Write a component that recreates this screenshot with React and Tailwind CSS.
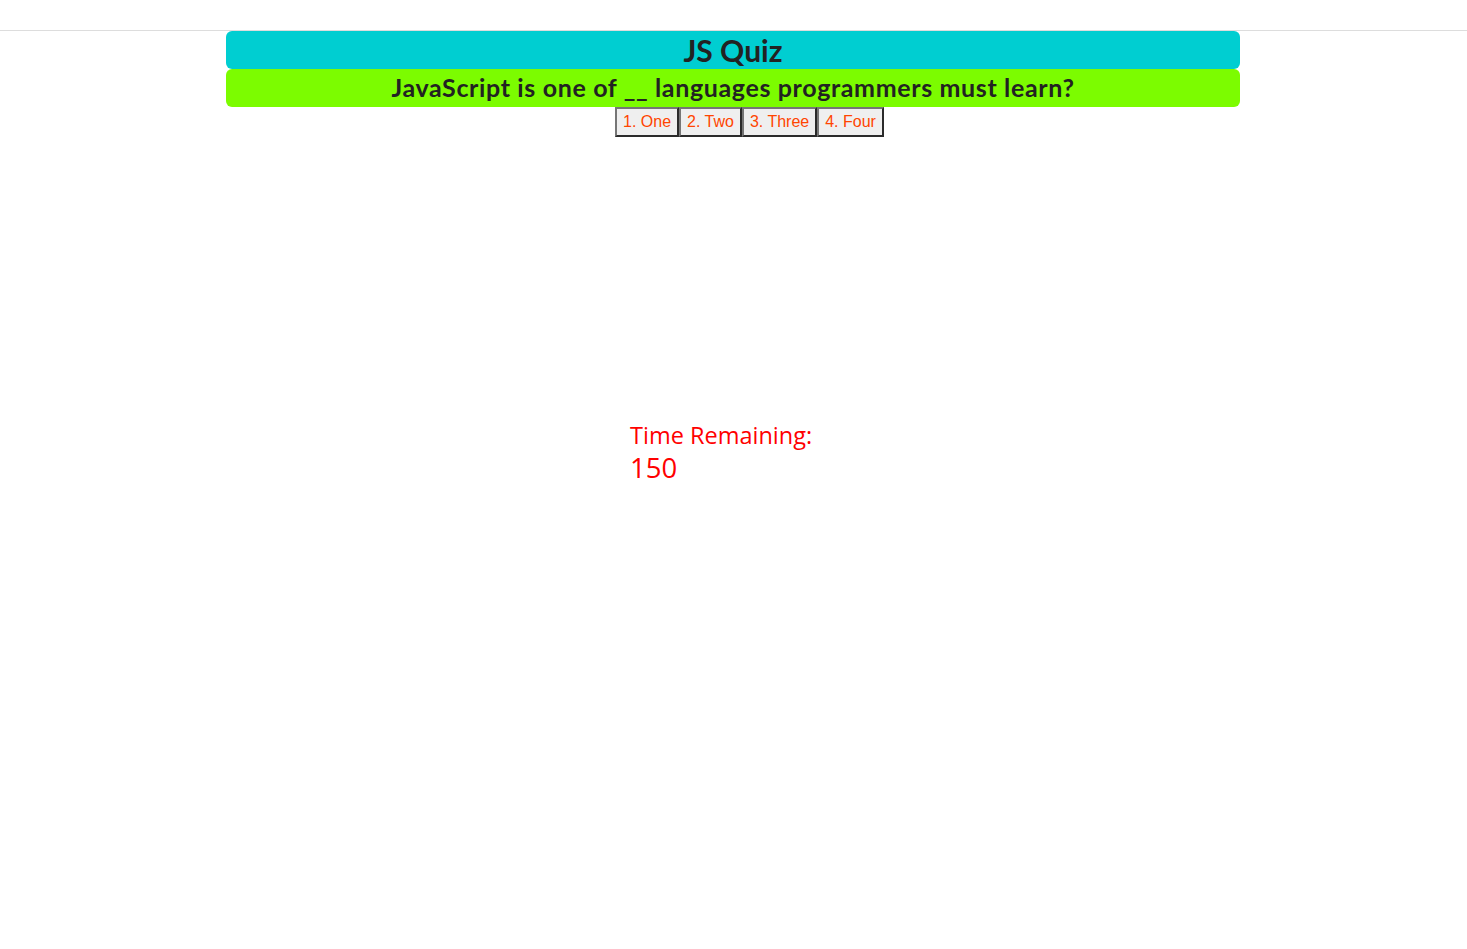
export default function App() {
  const opts = ["1. One", "2. Two", "3. Three", "4. Four"];
  return (
    <div className="min-h-[949px] bg-white">
      <div className="h-[31px] border-b border-[#dddddd]" />
      <div className="w-[1014px] ml-[226px]">
        <div
          className="h-[38px] bg-[#00ced1] rounded-[6px] flex items-center justify-center text-[#222222] font-bold text-[30px]"
          style={{ fontFamily: "Lato, 'Open Sans', sans-serif" }}
        >
          <span>JS Quiz</span>
        </div>
        <div
          className="h-[38px] bg-[#7cfc00] rounded-[6px] flex items-center justify-center text-[#222222] font-bold text-[25px] tracking-[0.64px]"
          style={{ fontFamily: "Lato, 'Open Sans', sans-serif" }}
        >
          JavaScript is one of __ languages programmers must learn?
        </div>
      </div>
      <div className="flex pl-[615px]">
        {opts.map((o) => (
          <button
            key={o}
            className="h-[30px] px-[6px] bg-[#efefef] text-[#ff4500] text-[16px] border-2 border-t-[#767676] border-l-[#767676] border-r-[#2b2b2b] border-b-[#2b2b2b]"
            style={{ fontFamily: "'Liberation Sans', Arial, sans-serif" }}
          >
            {o}
          </button>
        ))}
      </div>
      <div
        className="pl-[630px] pt-[282px] text-[#ff0000]"
        style={{ fontFamily: "'Open Sans', 'Noto Sans', sans-serif" }}
      >
        <div className="text-[23.5px] leading-[32px]">Time Remaining:</div>
        <div className="text-[27.5px] leading-[34px] font-medium">150</div>
      </div>
    </div>
  );
}
